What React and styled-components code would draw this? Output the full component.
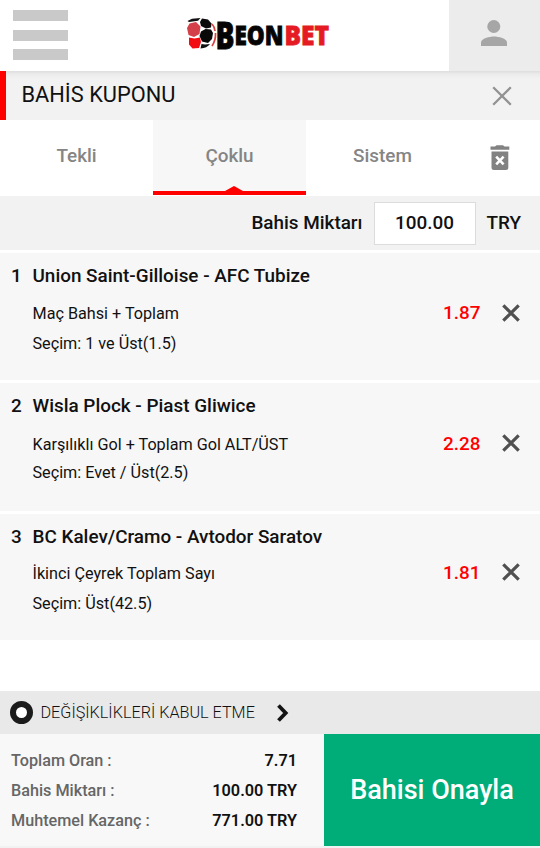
import React, { useState } from 'react';
import styled, { createGlobalStyle } from 'styled-components';

const bets = [
  { id: 1, match: 'Union Saint-Gilloise - AFC Tubize', market: 'Maç Bahsi + Toplam', pick: 'Seçim: 1 ve Üst(1.5)', odd: '1.87', height: 127, gap: 3, marketGap: 7, pickGap: 1, iconLift: 0 },
  { id: 2, match: 'Wisla Plock - Piast Gliwice', market: 'Karşılıklı Gol + Toplam Gol ALT/ÜST', pick: 'Seçim: Evet / Üst(2.5)', odd: '2.28', height: 128, gap: 3, marketGap: 8, pickGap: -1, iconLift: 2 },
  { id: 3, match: 'BC Kalev/Cramo - Avtodor Saratov', market: 'İkinci Çeyrek Toplam Sayı', pick: 'Seçim: Üst(42.5)', odd: '1.81', height: 126, gap: 3, marketGap: 6, pickGap: 1, iconLift: 2 }
];

const tabs = ['Tekli', 'Çoklu', 'Sistem'];

const summary = [
  { label: 'Toplam Oran :', value: '7.71' },
  { label: 'Bahis Miktarı :', value: '100.00 TRY' },
  { label: 'Muhtemel Kazanç :', value: '771.00 TRY' }
];

function Logo () {
  return (
    <svg width="146" height="40" viewBox="0 0 146 40">
      <path d="M2.500 4 L7 1.800 L15.500 1 L13 3.800 L4 5Z" fill="#111" />
      <path d="M15 5 L17 1.500 L23 2.500 L26.500 6.500 L26 10.500 L21 11.500 L16 9Z" fill="#0b0b0b" />
      <path d="M2 11 L4.500 6.500 L11 5 L15.500 9.500 L14.500 17 L9 20 L3.500 18Z" fill="#d3404a" />
      <path d="M16 14.500 L20.500 12 L26 12.500 L28 16 L27 22 L23 26 L17 24.500 L14.500 19Z" fill="#080808" />
      <path d="M4 20.500 L9.500 21.500 L15 20.500 L16 25 L14 31 L7.500 31.500 L4 27.500Z" fill="#f20d13" />
      <path d="M16.500 27 L20 27.500 L25 27 Q22 31 15.500 31.500Z" fill="#111" />
      <path d="M27 7 Q29.500 9.500 30 14 M30.500 16 Q31 23 27 29" fill="none" stroke="#d8434a" strokeWidth="1.700" />
      <LogoText x="30.500" y="31.500" fontSize="36.500" textLength="19" fill="#050505" stroke="#050505">B</LogoText>
      <LogoText x="49.500" y="28" fontSize="26" textLength="49" fill="#050505" stroke="#050505">EON</LogoText>
      <LogoText x="99.500" y="28" fontSize="26" textLength="44.500" fill="#e51b23" stroke="#e51b23">BET</LogoText>
    </svg>
  );
}

export default function App () {
  const [activeTab, setActiveTab] = useState('Çoklu');
  const [amount, setAmount] = useState('100.00');

  return (
    <Page>
      <GlobalStyle />
      <Header>
        <MenuButton aria-label="Menü"><span /><span /><span /></MenuButton>
        <LogoArea><Logo /></LogoArea>
        <UserButton aria-label="Hesap">
          <svg width="28" height="28" viewBox="0 0 28 28" fill="#a6a6a6">
            <circle cx="13.800" cy="7.500" r="6.500" />
            <path d="M1 27 V23.500 C1 19.500 9.500 17.500 14 17.500 S27 19.500 27 23.500 V27Z" />
          </svg>
        </UserButton>
      </Header>

      <TitleBar>
        <h1>BAHİS KUPONU</h1>
        <IconButton aria-label="Kapat">
          <svg width="20" height="20" viewBox="0 0 20 20" stroke="#929292" strokeWidth="2.300">
            <path d="M1.200 1.200 L18.800 18.800 M18.800 1.200 L1.200 18.800" />
          </svg>
        </IconButton>
      </TitleBar>

      <Tabs>
        {
          tabs.map(tab => (
            <Tab key={tab} $active={tab === activeTab} onClick={() => setActiveTab(tab)}>{ tab }</Tab>
          ))
        }
        <TrashButton aria-label="Temizle">
          <svg width="20" height="26" viewBox="0 0 20 26" fill="#828282">
            <path d="M0.500 1.500 H5 L6.500 0.300 H13 L14.500 1.500 H19.300 V4.700 H0.500Z" />
            <path d="M1.500 6.500 H18.300 V22.500 Q18.300 25 15.800 25 H4 Q1.500 25 1.500 22.500Z" />
            <path d="M6.200 11.700 L13.600 19.300 M13.600 11.700 L6.200 19.300" stroke="#fff" strokeWidth="2.600" />
          </svg>
        </TrashButton>
      </Tabs>

      <AmountBar>
        <label htmlFor="amount">Bahis Miktarı</label>
        <AmountInput id="amount" value={amount} onChange={e => setAmount(e.target.value)} />
        <span>TRY</span>
      </AmountBar>

      <BetList>
        {
          bets.map(bet => (
            <Bet key={bet.id} $height={bet.height} $gap={bet.gap}>
              <Match><Index>{ bet.id }</Index>{ bet.match }</Match>
              <Market $gap={bet.marketGap}>
                <span>{ bet.market }</span>
                <Odd>{ bet.odd }</Odd>
                <IconButton aria-label="Sil" $lift={bet.iconLift}>
                  <svg width="18" height="18" viewBox="0 0 18 18" stroke="#505050" strokeWidth="3.200">
                    <path d="M1.300 1.300 L16.700 16.700 M16.700 1.300 L1.300 16.700" />
                  </svg>
                </IconButton>
              </Market>
              <Pick $gap={bet.pickGap}>{ bet.pick }</Pick>
            </Bet>
          ))
        }
      </BetList>

      <Changes>
        <Radio />
        <span>DEĞİŞİKLİKLERİ KABUL ETME</span>
        <svg width="12" height="18" viewBox="0 0 12 18" fill="none" stroke="#141414" strokeWidth="3.800">
          <path d="M1.500 1.500 L8.700 9 L1.500 16.500" />
        </svg>
      </Changes>

      <Footer>
        <Summary>
          {
            summary.map(item => (
              <SummaryRow key={item.label}>
                <span>{ item.label }</span>
                <strong>{ item.value }</strong>
              </SummaryRow>
            ))
          }
        </Summary>
        <ConfirmButton>Bahisi Onayla</ConfirmButton>
      </Footer>
    </Page>
  );
}

const GlobalStyle = createGlobalStyle`
  * {
    box-sizing: border-box;
  }

  body {
    margin: 0;
    background: #fff;
    font-family: Roboto, sans-serif;
    color: #111;
  }

  button {
    border: none;
    padding: 0;
    background: none;
    font-family: inherit;
  }

  svg {
    display: block;
    overflow: visible;
  }
`;

const Page = styled.div`
  display: flex;
  flex-direction: column;
  width: 540px;
  height: 848px;
  overflow: hidden;
  background: #fff;
`;

const Header = styled.header`
  display: flex;
  height: 71px;
  flex-shrink: 0;
  background: #fff;
  box-shadow: 0 1px 8px rgba(0, 0, 0, 0.2);
`;

const MenuButton = styled.button`
  display: flex;
  flex-direction: column;
  gap: 8.500px;
  width: 68px;
  padding: 10px 0 0 13px;

  span {
    height: 11px;
    background: #c9c9c9;
  }
`;

const LogoArea = styled.div`
  flex: 1;
  padding: 17px 0 0 117px;
`;

const LogoText = styled.text.attrs({ lengthAdjust: 'spacingAndGlyphs' })`
  font-family: 'Open Sans', sans-serif;
  font-weight: 800;
  stroke-width: 0.800;
`;

const UserButton = styled.button`
  display: flex;
  justify-content: center;
  width: 91px;
  padding: 19px 2px 0 0;
  background: #ececec;
`;

const TitleBar = styled.div`
  display: flex;
  align-items: center;
  justify-content: space-between;
  height: 49px;
  flex-shrink: 0;
  padding: 0 28px 0 15.500px;
  border-left: 6px solid #f00;
  background: linear-gradient(#dedede, #ebebeb 3px, #f2f2f2 8px);

  h1 {
    margin: 0;
    font-size: 21.800px;
    font-weight: 400;
    line-height: 48px;
    height: 49px;
  }
`;

const IconButton = styled.button`
  display: flex;
  margin-bottom: ${props => props.$lift || 0}px;
`;

const Tabs = styled.nav`
  display: flex;
  height: 76px;
  flex-shrink: 0;
`;

const Tab = styled.button`
  position: relative;
  width: 153px;
  height: ${props => props.$active ? '74.500px' : '76px'};
  padding-bottom: ${props => props.$active ? '0' : '5px'};
  border-bottom: ${props => props.$active ? '4.500px solid #f00' : 'none'};
  background: ${props => props.$active ? '#f7f7f7' : 'transparent'};
  color: #858585;
  font-size: 18.900px;
  font-weight: 500;

  &::after {
    content: '';
    display: ${props => props.$active ? 'block' : 'none'};
    position: absolute;
    left: 72px;
    bottom: 0;
    border: 9px solid transparent;
    border-top: 0;
    border-bottom: 5px solid #f00;
  }
`;

const TrashButton = styled.button`
  display: flex;
  justify-content: center;
  flex: 1;
  padding: 25px 0 0 0;
`;

const AmountBar = styled.div`
  display: flex;
  align-items: center;
  justify-content: flex-end;
  height: 54px;
  flex-shrink: 0;
  padding: 0 19px 1px 0;
  background: #f2f2f2;
  font-size: 18.900px;
  font-weight: 500;
`;

const AmountInput = styled.input`
  width: 102px;
  height: 43px;
  margin: 2px 11px 0;
  padding: 0 0 2px;
  border: 1px solid #dcdcdc;
  background: #fff;
  color: #111;
  font: 500 18.900px Roboto, sans-serif;
  text-align: center;
`;

const BetList = styled.div`
  flex: 1;
`;

const Bet = styled.div`
  height: ${props => props.$height}px;
  margin-top: ${props => props.$gap}px;
  padding: 8px 20.500px 0 11px;
  background: #f7f7f7;
`;

const Match = styled.div`
  display: flex;
  height: 30px;
  line-height: 30px;
  font-size: 18.900px;
  font-weight: 500;
`;

const Index = styled.span`
  width: 21.500px;
`;

const Market = styled.div`
  display: flex;
  align-items: center;
  height: 30px;
  margin-top: ${props => props.$gap}px;
  padding-left: 21.500px;
  font-size: 16.200px;
`;

const Odd = styled.span`
  margin: -2px 21px 0 auto;
  color: #f00;
  font-size: 18.900px;
  font-weight: 500;
`;

const Pick = styled.div`
  height: 30px;
  margin-top: ${props => props.$gap}px;
  padding-left: 21.500px;
  font-size: 16.200px;
  line-height: 30px;
`;

const Changes = styled.div`
  display: flex;
  align-items: center;
  height: 43px;
  flex-shrink: 0;
  padding-left: 10px;
  background: #e9e9e9;
  font-size: 16.200px;
  font-weight: 300;

  svg {
    margin-left: 22px;
  }
`;

const Radio = styled.i`
  width: 23px;
  height: 23px;
  margin-right: 7.500px;
  border: 6px solid #1b1b1b;
  border-radius: 50%;
  background: #fff;
`;

const Footer = styled.footer`
  display: flex;
  height: 114px;
  flex-shrink: 0;
  padding-bottom: 2px;
  background: #f1f1f1;
`;

const Summary = styled.div`
  width: 324px;
  padding: 12px 27px 0 11px;
  background: #f8f8f8;
`;

const SummaryRow = styled.div`
  display: flex;
  justify-content: space-between;
  height: 30px;
  line-height: 30px;
  font-size: 16.200px;
  font-weight: 500;
  color: #666;

  strong {
    font-size: 16.300px;
    font-weight: 600;
    color: #111;
  }
`;

const ConfirmButton = styled.button`
  flex: 1;
  background: #00ad79;
  color: #fff;
  font-size: 27px;
  font-weight: 500;
`;
